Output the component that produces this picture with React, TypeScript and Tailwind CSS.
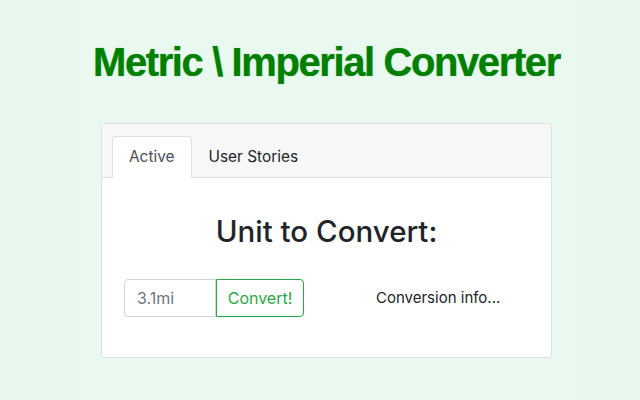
export default function App() {
  return (
    <div className="min-h-[400px] w-[640px] bg-[#e8f8ee] flex">
      <div className="ml-[75px] w-[499px] min-h-[400px] bg-[#e9f9ef] flex flex-col" style={{ fontFamily: 'Inter, "Noto Sans", sans-serif' }}>
        <h1
          className="mt-[38px] ml-[18px] whitespace-nowrap text-[40px] leading-[48px] font-bold text-[#008000] tracking-[-1.4px] [text-shadow:0_0_1px_rgba(0,100,0,0.6)]"
          style={{ fontFamily: '"Liberation Sans", Arial, sans-serif' }}
        >
          Metric \ Imperial Converter
        </h1>
        <div className="mt-[37px] ml-[26px] w-[451px] h-[235px] bg-white border border-[#dfdfdf] rounded-[4px] flex flex-col overflow-hidden">
          <div className="bg-[#f7f7f7] border-b border-[#dfdfdf] pt-[12px] px-[10px] flex text-[15.4px] leading-[24px]">
            <div className="bg-white border border-[#dee2e6] border-b-white rounded-t-[4px] px-[16px] pt-[8px] pb-[8px] -mb-px text-[#495057]">
              Active
            </div>
            <div className="px-[17px] pt-[9px] pb-[8px] text-[#212529]">User Stories</div>
          </div>
          <div className="flex-1 flex flex-col items-center pt-[35px]">
            <h2 className="text-[29.5px] leading-[36px] font-medium text-[#212529]">Unit to Convert:</h2>
            <div className="w-full flex mt-[30px] pl-[22px]">
              <div className="flex w-[252px]">
                <div className="w-[92px] h-[38px] border border-[#ced4da] rounded-l-[4px] px-[12px] flex items-center text-[16px] text-[#6c757d]">
                  3.1mi
                </div>
                <div className="h-[38px] w-[88px] justify-center border border-[#28a745] rounded-r-[4px] flex items-center text-[16px] text-[#28a745]">
                  Convert!
                </div>
              </div>
              <div className="pt-[7px] text-[15px] leading-[24px] text-[#212529]">Conversion info...</div>
            </div>
          </div>
        </div>
      </div>
    </div>
  );
}
